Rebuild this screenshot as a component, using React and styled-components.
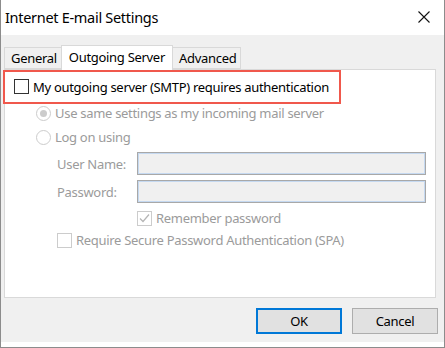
import React from "react";
import styled, { createGlobalStyle } from "styled-components";

const GlobalStyle = createGlobalStyle`
  html, body {
    margin: 0;
    padding: 0;
    background: #ffffff;
  }
  * {
    box-sizing: border-box;
  }
`;

const FONT = `"Noto Sans", "Open Sans", sans-serif`;

const SettingsDialog = () => {
  return (
    <Window>
      <GlobalStyle />
      <TitleBar>
        <Title>Internet E-mail Settings</Title>
        <CloseButton aria-label="Close">
          <svg width="12" height="12" viewBox="0 0 12 12">
            <path d="M0.5 0.5 L11.5 11.5 M11.5 0.5 L0.5 11.5" stroke="#111" strokeWidth="1.1" />
          </svg>
        </CloseButton>
      </TitleBar>

      <Body>
        <TabStrip>
          <Tab>General</Tab>
          <Tab active>Outgoing Server</Tab>
          <Tab>Advanced</Tab>
        </TabStrip>

        <Panel>
          <HighlightRow>
            <CheckBox />
            <Label>My outgoing server (SMTP) requires authentication</Label>
          </HighlightRow>

          <Options>
            <OptionRow>
              <Radio checked />
              <Label disabled>Use same settings as my incoming mail server</Label>
            </OptionRow>
            <OptionRow>
              <Radio />
              <Label disabled>Log on using</Label>
            </OptionRow>

            <Fields>
              <FieldLabel>User Name:</FieldLabel>
              <TextBox />
              <FieldLabel>Password:</FieldLabel>
              <TextBox />
              <span />
              <OptionRow compact>
                <CheckBox disabled>
                  <svg width="13" height="13" viewBox="0 0 13 13">
                    <path d="M2 6.5 L5 9.5 L11 2.5" fill="none" stroke="#b5b5b5" strokeWidth="1.2" />
                  </svg>
                </CheckBox>
                <Label disabled>Remember password</Label>
              </OptionRow>
            </Fields>

            <SpaRow>
              <CheckBox disabled />
              <Label disabled>Require Secure Password Authentication (SPA)</Label>
            </SpaRow>
          </Options>
        </Panel>

        <Footer>
          <Button primary>OK</Button>
          <Button>Cancel</Button>
        </Footer>
      </Body>
      <BottomEdge />
    </Window>
  );
};

export default function App() {
  return <SettingsDialog />;
}

const Window = styled.div`
  width: 445px;
  height: 348px;
  display: flex;
  flex-direction: column;
  border-left: 1px solid #8c8c8c;
  border-right: 1px solid #8c8c8c;
  border-bottom: 1px solid #8c8c8c;
  font-family: ${FONT};
  color: #000;
  overflow: hidden;
`;

const TitleBar = styled.div`
  height: 35px;
  flex-shrink: 0;
  display: flex;
  align-items: center;
  justify-content: space-between;
  background: #fff;
  padding: 0 14px 0 4px;
`;

const Title = styled.div`
  font-size: 14.5px;
  letter-spacing: -0.3px;
  padding-bottom: 2px;
`;

const CloseButton = styled.div`
  display: flex;
  align-items: center;
  padding-bottom: 2px;
`;

const Body = styled.div`
  flex: 1;
  display: flex;
  flex-direction: column;
  background: #f0f0f0;
  padding: 9px 6px 0 2px;
`;

const TabStrip = styled.div`
  display: flex;
  align-items: flex-end;
  height: 25px;
  padding-left: 1px;
  position: relative;
  z-index: 1;
`;

const Tab = styled.div`
  height: ${(p) => (p.active ? "25px" : "22px")};
  padding: ${(p) => (p.active ? "0 7px 2px 7px" : "0 4px 0 6px")};
  margin-bottom: ${(p) => (p.active ? "-1px" : "0")};
  display: flex;
  align-items: center;
  font-size: 13px;
  letter-spacing: -0.3px;
  background: ${(p) => (p.active ? "#fff" : "#f0f0f0")};
  border: 1px solid #d9d9d9;
  border-bottom: ${(p) => (p.active ? "none" : "1px solid #d9d9d9")};
  margin-left: -1px;
  &:first-child {
    margin-left: 0;
  }
`;

const Panel = styled.div`
  height: 229px;
  margin: 0 2px 0 1px;
  background: #fff;
  border: 1px solid #d9d9d9;
  display: flex;
  flex-direction: column;
`;

const HighlightRow = styled.div`
  width: 338px;
  height: 34px;
  margin: 0 0 0 -2px;
  border: 2px solid #f0584c;
  display: flex;
  align-items: center;
  gap: 4px;
  padding-left: 9px;
  padding-bottom: 1px;
`;

const Options = styled.div`
  display: flex;
  flex-direction: column;
  margin-top: -3px;
  padding: 0 0 0 31px;
`;

const OptionRow = styled.div`
  height: ${(p) => (p.compact ? "20px" : "24px")};
  display: flex;
  align-items: center;
  gap: 4px;
`;

const SpaRow = styled(OptionRow)`
  margin-left: 21px;
`;

const Label = styled.span`
  font-size: 13px;
  letter-spacing: -0.3px;
  white-space: nowrap;
  color: ${(p) => (p.disabled ? "#9b9b9b" : "#000")};
`;

const CheckBox = styled.span`
  width: 15px;
  height: 15px;
  flex-shrink: 0;
  display: flex;
  align-items: center;
  justify-content: center;
  background: #fff;
  border: 1px solid ${(p) => (p.disabled ? "#cccccc" : "#333333")};
`;

const Radio = styled.span`
  width: 15px;
  height: 15px;
  flex-shrink: 0;
  border-radius: 50%;
  border: 1px solid #cccccc;
  background: #fff;
  position: relative;
  &::after {
    content: "";
    display: ${(p) => (p.checked ? "block" : "none")};
    position: absolute;
    left: 3px;
    top: 3px;
    width: 7px;
    height: 7px;
    border-radius: 50%;
    background: #cccccc;
  }
`;

const Fields = styled.div`
  display: grid;
  grid-template-columns: 80px 289px;
  grid-auto-rows: auto;
  row-gap: 5px;
  align-items: center;
  padding: 3px 0 0 21px;
`;

const FieldLabel = styled.span`
  font-size: 13px;
  letter-spacing: -0.3px;
  color: #9b9b9b;
`;

const TextBox = styled.div`
  height: 23px;
  background: #f0f0f0;
  border: 1px solid #a8a8a8;
  box-shadow: inset 0 0 0 1px #c5d9f1;
`;

const Footer = styled.div`
  flex: 1;
  display: flex;
  justify-content: flex-end;
  align-items: flex-start;
  gap: 10px;
  padding-top: 10px;
`;

const Button = styled.div`
  width: 86px;
  height: 26px;
  display: flex;
  align-items: center;
  justify-content: center;
  font-size: 13px;
  letter-spacing: -0.3px;
  background: #e1e1e1;
  border: ${(p) => (p.primary ? "2px solid #0078d7" : "1px solid #adadad")};
`;

const BottomEdge = styled.div`
  height: 5px;
  flex-shrink: 0;
  background: #fff;
`;
